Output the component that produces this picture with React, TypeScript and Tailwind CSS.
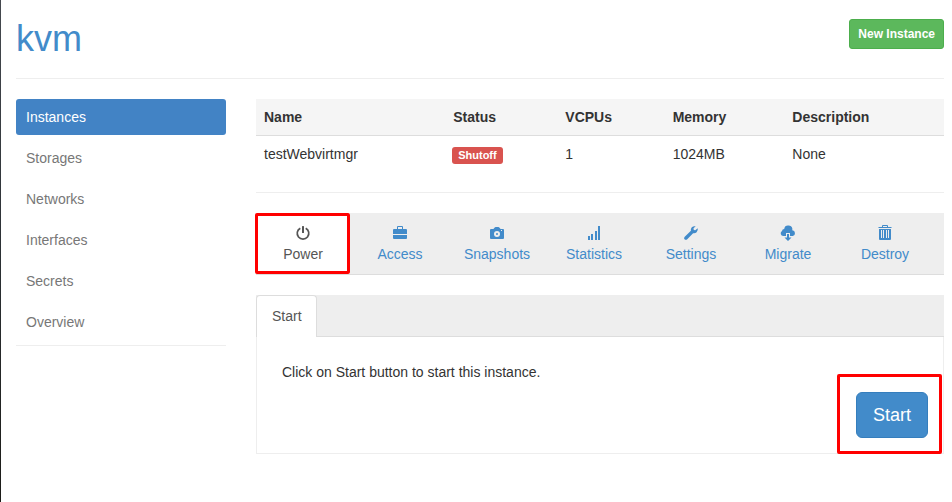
import type { ReactNode } from "react";

const navItems = ["Instances", "Storages", "Networks", "Interfaces", "Secrets", "Overview"];

function Glyph({ children }: { children: ReactNode }) {
  return (
    <svg viewBox="0 0 14 14" className="size-[14px] overflow-visible" fill="currentColor" aria-hidden="true">
      {children}
    </svg>
  );
}

const tabs: { label: string; icon: ReactNode }[] = [
  {
    label: "Power",
    icon: (
      <Glyph>
        <path d="M4.300 2.200A5.800 5.800 0 1 0 9.700 2.200" fill="none" stroke="currentColor" strokeWidth="1.700" />
        <rect x="6" y="0" width="2" height="7" rx="0.5" />
      </Glyph>
    ),
  },
  {
    label: "Access",
    icon: (
      <Glyph>
        <path d="M4 3V1Q4 0 5 0h4q1 0 1 1v2h3q1 0 1 1v4H0V4q0-1 1-1zm1 0h4V1H5z" />
        <path d="M0 9h14v3q0 1-1 1H1q-1 0-1-1z" />
      </Glyph>
    ),
  },
  {
    label: "Snapshots",
    icon: (
      <Glyph>
        <path
          fillRule="evenodd"
          d="M1 3h2.400l1.300-1.500q.3-.5.9-.5h2.800q.6 0 .9.5L10.600 3H13q1 0 1 1v8q0 1-1 1H1q-1 0-1-1V4q0-1 1-1zm6 2a3 3 0 1 0 0 6a3 3 0 0 0 0-6zm0 2a1 1 0 1 1 0 2a1 1 0 0 1 0-2zM11 4v1h1V4z"
        />
      </Glyph>
    ),
  },
  {
    label: "Statistics",
    icon: (
      <Glyph>
        <path d="M1 10h2v4H1zM4 8h2v6H4zM8 5h2v9H8zM11 0h2v14h-2z" />
      </Glyph>
    ),
  },
  {
    label: "Settings",
    icon: (
      <Glyph>
        <path d="M13.700 2.300 11.300 4.300 9.800 3.900 9.500 2.300 11.700.3Q9.500-.3 7.800 1.200 6.400 2.700 6.900 4.700L.5 10.900Q-.4 12 .5 13.200q1.200 1.100 2.500.2L9.100 7.200q2 .4 3.500-.9 1.700-1.700 1.100-4z" />
      </Glyph>
    ),
  },
  {
    label: "Migrate",
    icon: (
      <Glyph>
        <path d="M5 10H2.200A2.700 2.700 0 0 1 1 5 2.300 2.300 0 0 1 3.200 3 4.100 4.100 0 0 1 11.300 4.300 2.900 2.900 0 0 1 11.800 10H9V7H5z" />
        <path d="M6 8h2v3.500h2.500L7 15 3.500 11.500H6z" />
      </Glyph>
    ),
  },
  {
    label: "Destroy",
    icon: (
      <Glyph>
        <path d="M4 1V0q0-1 1-1h4q1 0 1 1v1h3.500v1H.5V1zm1 0h4V0H5z" />
        <path
          fillRule="evenodd"
          d="M1 3h12v10q0 1-1 1H2q-1 0-1-1zM3 4v8h1V4zm2 0v8h1V4zm3 0v8h1V4zm2 0v8h1V4z"
        />
      </Glyph>
    ),
  },
];

export default function App() {
  return (
    <div className="flex min-h-screen bg-white font-['Liberation_Sans',Arial,sans-serif] text-sm text-[#333]">
      <div className="w-px shrink-0 bg-linear-to-b from-[#45494f] via-[#2c3135] to-[#1c1c18]" />
      <div className="min-w-0 flex-1 pt-[19px] pr-2 pl-[15px]">
        <header className="flex items-start justify-between border-b border-[#eee] pb-[19px]">
          <h1 className="text-[36px] leading-10 text-[#428bca]">kvm</h1>
          <button className="h-[30px] rounded-[3px] border border-[#4cae4c] bg-[#5cb85c] px-2 text-xs font-bold text-white">
            New Instance
          </button>
        </header>

        <div className="flex gap-[30px] pt-5">
          <aside className="w-[210px] shrink-0">
            <nav className="flex flex-col gap-[5px] border-b border-[#eee] pb-[5px]">
              {navItems.map((item, i) => (
                <a
                  key={item}
                  href="#"
                  className={
                    i === 0
                      ? "rounded-[3px] bg-[#4283c5] px-[10px] py-2 text-white"
                      : "px-[10px] py-2 text-[#777]"
                  }
                >
                  {item}
                </a>
              ))}
            </nav>
          </aside>

          <main className="min-w-0 flex-1">
            <div className="border-b border-[#eee] pb-5">
              <table className="w-full table-fixed text-left">
                <colgroup>
                  <col className="w-[27.5%]" />
                  <col className="w-[16.3%]" />
                  <col className="w-[15.6%]" />
                  <col className="w-[17.4%]" />
                  <col />
                </colgroup>
                <thead>
                  <tr className="border-b border-[#ddd] bg-[#f5f5f5]">
                    <th className="p-2">Name</th>
                    <th className="p-2">Status</th>
                    <th className="p-2">VCPUs</th>
                    <th className="p-2">Memory</th>
                    <th className="p-2">Description</th>
                  </tr>
                </thead>
                <tbody>
                  <tr>
                    <td className="p-2">testWebvirtmgr</td>
                    <td className="px-[7px] pt-[11px] pb-2">
                      <span className="block w-fit rounded-[3px] bg-[#d9534f] px-[6px] text-[11px] leading-[17px] font-bold text-white">
                        Shutoff
                      </span>
                    </td>
                    <td className="p-2">1</td>
                    <td className="p-2">1024MB</td>
                    <td className="p-2">None</td>
                  </tr>
                </tbody>
              </table>
            </div>

            <nav className="mt-5 grid grid-cols-[95px_repeat(6,1fr)] gap-x-px border-b border-[#ddd] bg-[#eee] pr-[11px]">
              {tabs.map(({ label, icon }, i) => (
                <a
                  key={label}
                  href="#"
                  className={
                    i === 0
                      ? "relative mr-px flex flex-col items-center gap-px bg-white py-[10px] text-[#555]"
                      : "flex flex-col items-center gap-px py-[10px] text-[#428bca]"
                  }
                >
                  <span className="flex h-5 items-center">{icon}</span>
                  <span>{label}</span>
                  {i === 0 && (
                    <span className="absolute inset-y-0 right-0 -left-px rounded-[2px] border-3 border-[#f00]" />
                  )}
                </a>
              ))}
            </nav>

            <section className="mt-5">
              <div className="flex border-b border-[#ddd] bg-[#eee]">
                <a
                  href="#"
                  className="-mb-px rounded-t border border-b-0 border-[#ddd] bg-white pt-[10px] pr-[14px] pb-[11px] pl-[15px] text-[#555]"
                >
                  Start
                </a>
              </div>
              <div className="border border-t-0 border-[#eee] px-[15px] pt-[25px] pb-[15px]">
                <p className="px-[10px]">Click on Start button to start this instance.</p>
                <div className="flex justify-end pt-[10px]">
                  <div className="relative">
                    <button className="h-[46px] rounded-md border border-[#357ebd] bg-[#428bca] px-4 text-lg text-white">
                      Start
                    </button>
                    <span className="pointer-events-none absolute -top-[18px] -right-[14px] -bottom-4 -left-[19px] rounded-[2px] border-3 border-[#f00]" />
                  </div>
                </div>
              </div>
            </section>
          </main>
        </div>
      </div>
    </div>
  );
}
